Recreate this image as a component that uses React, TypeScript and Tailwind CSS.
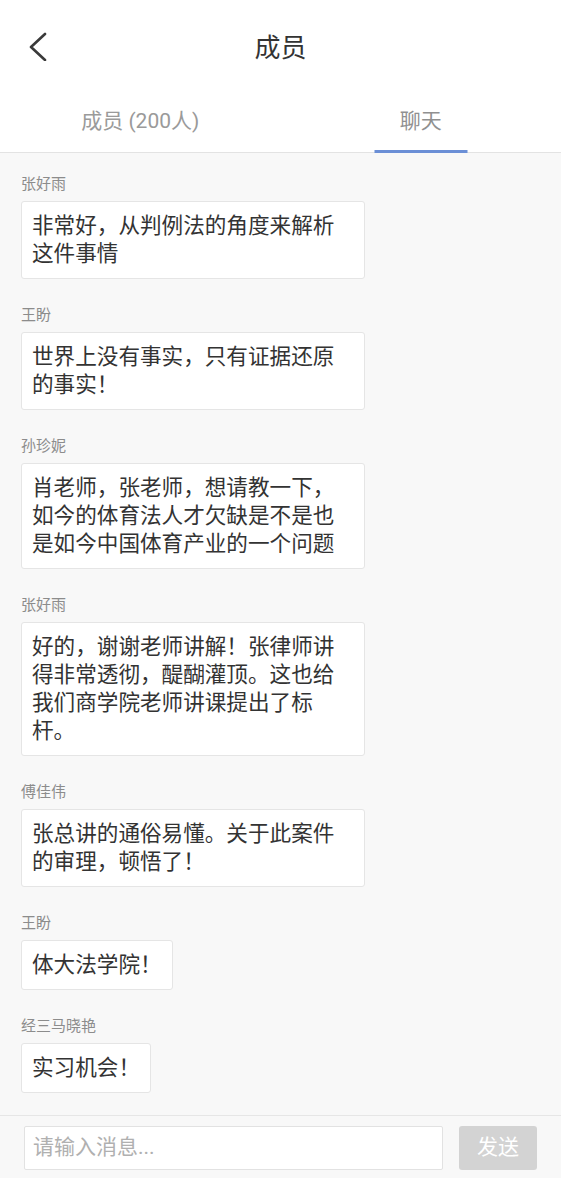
import React from 'react';

interface Message {
    id: number;
    name: string;
    text: string;
}

const messages: Message[] = [
    { id: 1, name: '张好雨', text: '非常好，从判例法的角度来解析这件事情' },
    { id: 2, name: '王盼', text: '世界上没有事实，只有证据还原的事实！' },
    { id: 3, name: '孙珍妮', text: '肖老师，张老师，想请教一下，如今的体育法人才欠缺是不是也是如今中国体育产业的一个问题' },
    { id: 4, name: '张好雨', text: '好的，谢谢老师讲解！张律师讲得非常透彻，醍醐灌顶。这也给我们商学院老师讲课提出了标杆。' },
    { id: 5, name: '傅佳伟', text: '张总讲的通俗易懂。关于此案件的审理，顿悟了！' },
    { id: 6, name: '王盼', text: '体大法学院！' },
    { id: 7, name: '经三马晓艳', text: '实习机会！' },
];

const font = "font-['Roboto','Noto_Sans_CJK_SC',sans-serif]";

const App: React.FC = () => {
    return (
        <div className={`flex flex-col h-[1178px] w-full bg-white overflow-hidden ${font}`}>
            {/* Header */}
            <div className="relative h-[95px] flex items-center justify-center shrink-0">
                <button className="absolute left-[24px] top-[29px] w-[28px] h-[34px] flex items-center justify-center">
                    <svg width="20" height="30" viewBox="0 0 20 30" fill="none">
                        <polyline points="17,3 3,16 17,29" stroke="#3a3a3a" strokeWidth="2.6" strokeLinecap="round" strokeLinejoin="round" />
                    </svg>
                </button>
                <span className="text-[26px] leading-none text-[#333]">成员</span>
            </div>

            {/* Tabs */}
            <div className="flex h-[58px] border-b border-[#e3e3e3] shrink-0">
                <div className="flex-1 flex items-center justify-center pb-[4px]">
                    <span className="text-[21px] text-[#9a9a9a]">成员 (200人)</span>
                </div>
                <div className="relative flex-1 flex items-center justify-center pb-[4px]">
                    <span className="text-[21px] text-[#909090]">聊天</span>
                    <div className="absolute bottom-[-1px] left-1/2 -translate-x-1/2 w-[93px] h-[3px] bg-[#6b8fd6]"></div>
                </div>
            </div>

            {/* Chat */}
            <div className="flex-1 bg-[#f8f8f8] overflow-hidden px-[21px] pt-[21px]">
                <div className="flex flex-col gap-[26px]">
                    {messages.map((m) => (
                        <div key={m.id} className="flex flex-col items-start">
                            <span className="text-[15px] leading-[20px] text-[#8c8c8c]">{m.name}</span>
                            <div className="mt-[7px] max-w-[344px] bg-white border border-[#e5e5e5] rounded-[3px] px-[10px] py-[10px] text-[21.6px] leading-[28px] text-[#333]">
                                {m.text}
                            </div>
                        </div>
                    ))}
                </div>
            </div>

            {/* Input bar */}
            <div className="shrink-0 flex items-center gap-[16px] px-[24px] pt-[10px] pb-[8px] border-t border-[#e6e6e6] bg-[#f8f8f8]">
                <div className="flex-1 h-[44px] flex items-center bg-white border border-[#e2e2e2] rounded-[2px] pl-[8px]">
                    <span className="text-[21px] text-[#b0b0b0]">请输入消息...</span>
                </div>
                <button className="w-[78px] h-[44px] rounded-[3px] bg-[#d3d3d3] text-white text-[21px] flex items-center justify-center">
                    发送
                </button>
            </div>
        </div>
    );
};

export default App;
